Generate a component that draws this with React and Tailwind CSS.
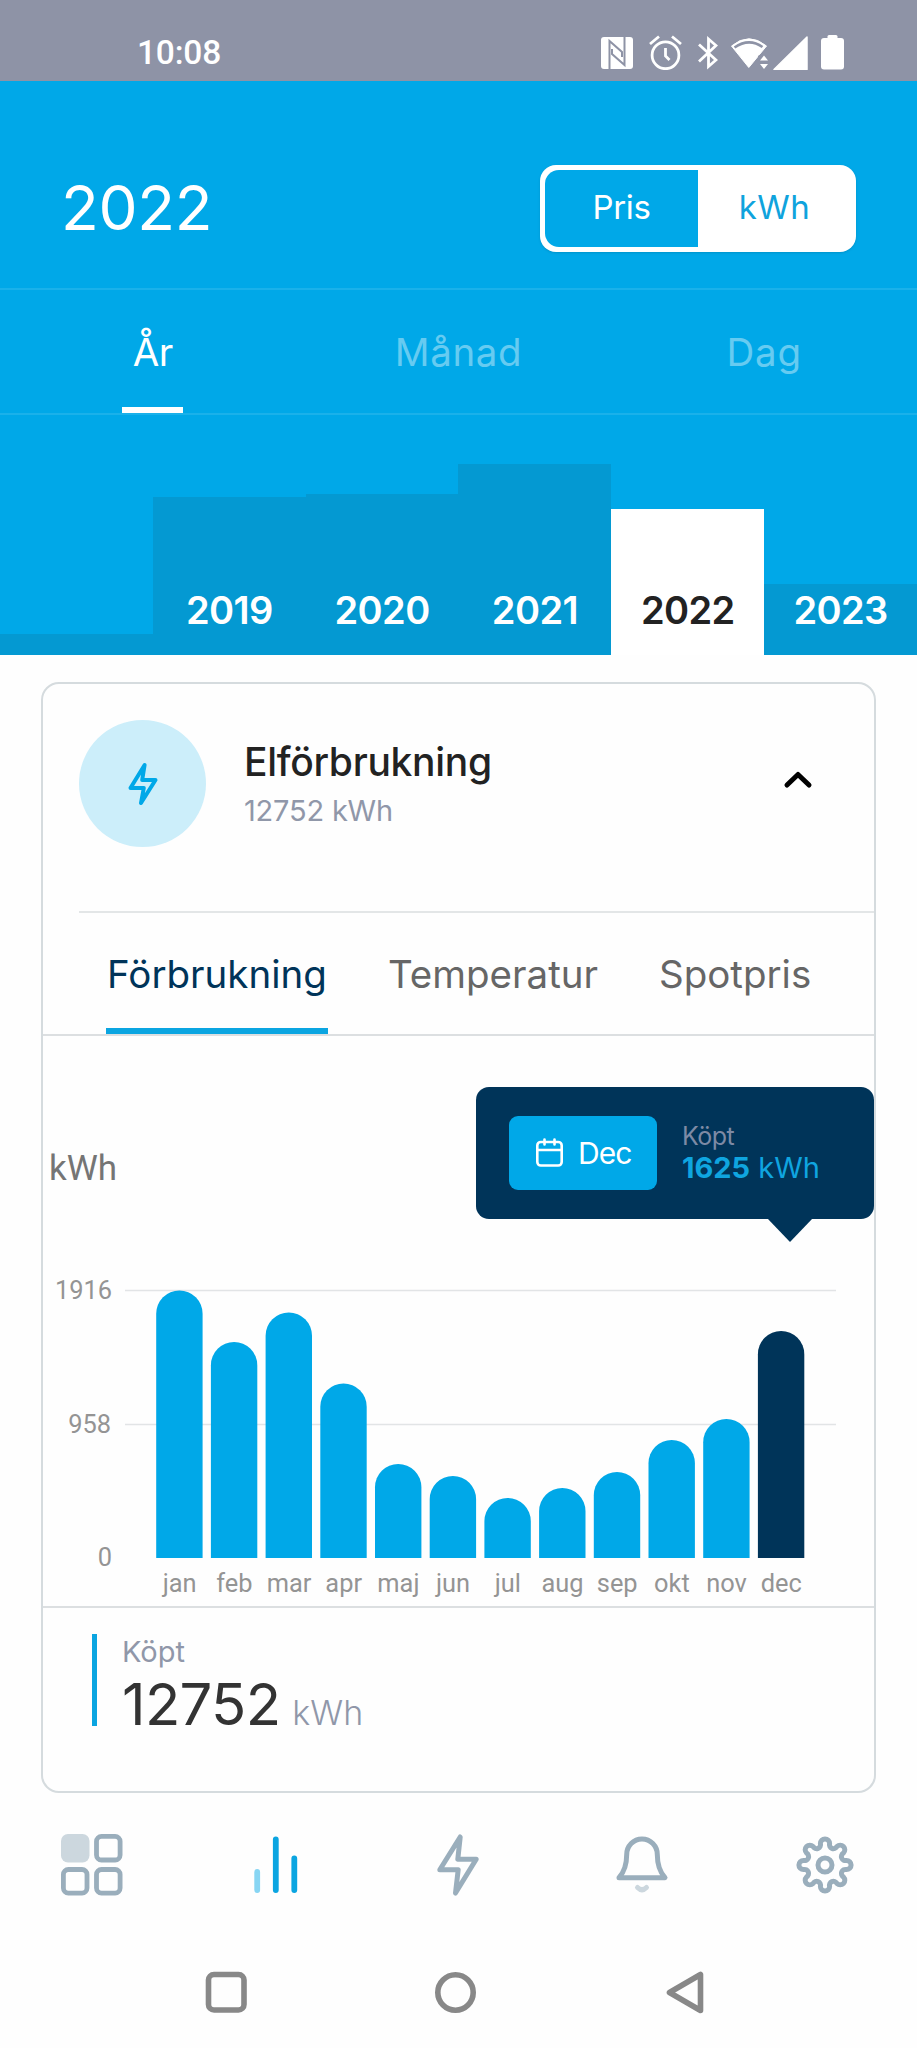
import React from "react";

const years = [
  { label: "", height: "h-[21px]" },
  { label: "2019", height: "h-[158px]" },
  { label: "2020", height: "h-[161px]" },
  { label: "2021", height: "h-[191px]" },
  { label: "2022", height: "h-[146px]", active: true },
  { label: "2023", height: "h-[71px]" },
];

const months = [
  { name: "jan", size: 267.5 },
  { name: "feb", size: 216 },
  { name: "mar", size: 245.5 },
  { name: "apr", size: 174.5 },
  { name: "maj", size: 94 },
  { name: "jun", size: 82 },
  { name: "jul", size: 60 },
  { name: "aug", size: 70 },
  { name: "sep", size: 86 },
  { name: "okt", size: 118 },
  { name: "nov", size: 139 },
  { name: "dec", size: 227, active: true },
];

const gearPath = () => {
  const turn = (x, y, deg) => {
    const a = (deg * Math.PI) / 180;
    const px = x * Math.cos(a) - y * Math.sin(a);
    const py = x * Math.sin(a) + y * Math.cos(a);
    return `${px.toFixed(2)} ${py.toFixed(2)}`;
  };
  let d = `M${turn(-4.6, -21.5, 0)}`;
  for (let i = 0; i < 8; i++) {
    d += `A4.6 4.6 0 0 1 ${turn(4.6, -21.5, i * 45)}`;
    d += `A4 4 0 0 0 ${turn(-4.6, -21.5, (i + 1) * 45)}`;
  }
  return d + "Z";
};

const StatusBar = () => {
  return (
    <div className="flex h-[81px] items-start justify-between bg-[#8e93a6] pr-[73px] pl-[137px] text-white">
      <span className="mt-[33px] font-['Roboto',sans-serif] text-[33.5px] leading-[40px] font-medium tracking-[-0.2px]">
        10:08
      </span>
      <div className="mt-[34px] flex">
        <svg className="mr-4" width="32" height="36" viewBox="0 -3 32 36">
          <rect width="32" height="32" rx="3" fill="#fff" />
          <path
            d="M8.5 32V4L21 15V20M23.500 0V28L11 17V12"
            fill="none"
            stroke="#8e93a6"
            strokeWidth="2"
          />
        </svg>
        <svg
          className="mr-4"
          width="33"
          height="36"
          viewBox="0 0 33 36"
          fill="none"
          stroke="#fff"
          strokeWidth="2.8"
        >
          <circle cx="16.5" cy="21.3" r="13.4" />
          <path d="M16.5 14v8l4 4M1 10l9-7.5M32 10l-9-7.5" />
        </svg>
        <svg
          className="mr-3"
          width="20"
          height="36"
          viewBox="0 0 20 36"
          fill="none"
          stroke="#fff"
          strokeWidth="2.8"
        >
          <path d="M1 10.5L18 26l-7.5 6.5V5L18 11.5 1 27.5" />
        </svg>
        <svg className="mr-[5px]" width="38" height="36" viewBox="0 0 38 36">
          <path
            d="M1.5 12Q19-2.5 36.5 12L18.8 33.5Z"
            fill="#fff"
            stroke="#fff"
            strokeLinejoin="round"
          />
          <path
            d="M4.5 13.5Q19 3.5 32.5 13"
            fill="none"
            stroke="#8e93a6"
            strokeWidth="2.6"
          />
          <path d="M28 22L33 18.500h5V36H28z" fill="#8e93a6" />
          <path d="M34 21.500l4 5h-8zM34 35l4-5h-8z" fill="#fff" />
        </svg>
        <svg className="mr-[13px]" width="35" height="36" viewBox="0 0 35 36">
          <path
            d="M1 35.5L34 3V35.5Z"
            fill="#fff"
            stroke="#fff"
            strokeWidth="1.5"
            strokeLinejoin="round"
          />
        </svg>
        <svg width="23" height="36" viewBox="0 0 23 36" fill="#fff">
          <rect x="6.5" y="1" width="10" height="6" rx="1.5" />
          <rect y="4" width="23" height="31.5" rx="3" />
        </svg>
      </div>
    </div>
  );
};

const Header = () => {
  return (
    <header className="bg-[#00a8e8] text-white">
      <div className="flex h-[209px] items-center justify-between border-b-2 border-[#1ab1ea] px-[61px] pt-[47px]">
        <h1 className="text-[62px] leading-none tracking-[-0.3px]">2022</h1>
        <div className="flex h-[87px] w-[316px] rounded-2xl bg-white p-[5px] text-[33px] shadow-sm">
          <button className="flex w-[153px] items-center justify-center rounded-l-[14px] bg-[#00a8e8] tracking-[-0.4px]">
            Pris
          </button>
          <button className="flex flex-1 items-center justify-center tracking-[0.5px] text-[#0fa3dd]">
            kWh
          </button>
        </div>
      </div>
      <div className="grid h-[125px] grid-cols-3 border-b-2 border-[#1ab1ea] text-center text-[38.5px] leading-[46px]">
        <div className="flex flex-col items-center justify-between pt-[39px]">
          <span className="tracking-[-0.5px]">År</span>
          <span className="h-[6px] w-[61px] bg-white"></span>
        </div>
        <div className="pt-[39px] tracking-[0.6px] text-[#66cbf1]">Månad</div>
        <div className="pt-[39px] tracking-[0.8px] text-[#66cbf1]">Dag</div>
      </div>
      <div className="flex h-[240px] items-end">
        {years.map((year) => (
          <div
            key={year.label}
            className={`${year.height} ${
              year.active ? "bg-white text-[#222]" : "bg-[#0499d2]"
            } flex w-1/6 items-end justify-center text-[38px] leading-[46px] font-semibold`}
          >
            {year.label && (
              <span className="pb-[22px] tracking-[-0.6px]">{year.label}</span>
            )}
          </div>
        ))}
      </div>
    </header>
  );
};

const Tooltip = () => {
  return (
    <div className="absolute top-[51px] right-0 flex h-[132px] w-[398px] items-center rounded-[13px] bg-[#003459] pl-[33px]">
      <div className="flex h-[74px] w-[148px] items-center rounded-[9px] bg-[#00a8e8] pl-[27px] text-[30px] text-white">
        <svg
          width="27"
          height="30"
          viewBox="0 0 27 30"
          fill="none"
          stroke="#fff"
          strokeWidth="2.6"
          strokeLinecap="round"
        >
          <rect x="1.3" y="4" width="24.4" height="23.5" rx="3.5" />
          <path d="M1.3 12h24.400M8.5 1.500v5M18.5 1.500v5" />
        </svg>
        <span className="ml-[15px] tracking-[-1px]">Dec</span>
      </div>
      <div className="ml-[25px] pb-[2px] leading-[32px]">
        <div className="text-[25px] tracking-[-0.5px] text-[#7d8aa5]">Köpt</div>
        <div className="text-[29px] text-[#0fa5e0]">
          <b>1625</b> kWh
        </div>
      </div>
      <svg
        className="absolute top-[131px] left-[291px]"
        width="46"
        height="24"
        viewBox="0 0 46 24"
      >
        <path d="M0 0h46L23 24z" fill="#003459" />
      </svg>
    </div>
  );
};

const Chart = () => {
  return (
    <div className="relative h-[572px] border-b-2 border-[#dcdfe1] pt-[110px] font-['Roboto',sans-serif]">
      <div className="mb-3 pl-[6px] text-[35px] leading-[46px] text-[#757575]">
        kWh
      </div>
      <svg
        className="block"
        width="831"
        height="400"
        viewBox="0 0 831 400"
        fontSize="25.4"
        fill="#949494"
      >
        <path d="M82 86.5h711M82 220.5h711" stroke="#e2e4e6" strokeWidth="1.5" />
        <g textAnchor="end">
          <text x="69" y="94.500">1916</text>
          <text x="68" y="228.500">958</text>
          <text x="69" y="362">0</text>
        </g>
        {months.map((month, i) => {
          const x = 113.2 + i * 54.7;
          const top = 354 - month.size;
          return (
            <g key={month.name}>
              <path
                d={`M${x} 354V${top + 23.2}a23.2 23.2 0 0 1 46.4 0V354z`}
                fill={month.active ? "#003459" : "#00a8e8"}
              />
              <text x={x + 23.4} y="388" textAnchor="middle">
                {month.name}
              </text>
            </g>
          );
        })}
      </svg>
      <div className="font-['Inter',sans-serif]">
        <Tooltip />
      </div>
    </div>
  );
};

const UsageCard = () => {
  return (
    <section className="mx-[41px] mt-[27px] h-[1111px] overflow-hidden rounded-[18px] border-2 border-[#d5dbde]">
      <div className="ml-[36px] flex h-[229px] items-start border-b-2 border-[#e3e6e7] pt-9">
        <div className="flex h-[127px] w-[127px] items-center justify-center rounded-full bg-[#cceefa]">
          <svg
            width="34"
            height="46"
            viewBox="-17 -23 34 46"
            fill="none"
            stroke="#00a8e8"
            strokeWidth="4"
            strokeLinejoin="round"
          >
            <path d="M1.6-19L-.8-4h13.300L-2 19 .8 4h-13.300z" />
          </svg>
        </div>
        <div className="ml-[38px] flex-1 pt-[19px]">
          <h2 className="text-[39px] leading-[46px] font-medium tracking-[-0.3px] text-[#222]">
            Elförbrukning
          </h2>
          <p className="mt-[9px] text-[29px] leading-[34px] tracking-[-0.2px] text-[#9097a9]">
            12752 kWh
          </p>
        </div>
        <svg
          className="mt-[48px] mr-[60px]"
          width="32"
          height="24"
          viewBox="0 0 32 24"
          fill="none"
          stroke="#000"
          strokeWidth="5"
          strokeLinecap="round"
          strokeLinejoin="round"
        >
          <path d="M5 17L16 6.5 27 17" />
        </svg>
      </div>
      <div className="flex h-[123px] gap-[60px] border-b-2 border-[#dcdfe1] pl-[63px] text-[38.5px] leading-[46px] text-[#666]">
        <div className="flex w-[222px] flex-col items-center justify-between pt-[38px] text-[#003459]">
          <span>Förbrukning</span>
          <span className="h-[6px] w-full bg-[#0ba5e1]"></span>
        </div>
        <div className="w-[211px] pt-[38px]">Temperatur</div>
        <div className="pt-[38px]">Spotpris</div>
      </div>
      <Chart />
      <div className="flex pt-[26px] pl-[49px]">
        <div className="h-[92px] w-[5px] bg-[#0ba5e1]"></div>
        <div className="ml-[25px] text-[#9097a9]">
          <div className="text-[29px] leading-[36px]">Köpt</div>
          <div className="flex items-baseline text-[34px] leading-[68px] font-light">
            <span className="mr-3 text-[58px] font-normal tracking-[-0.7px] text-[#333]">
              12752
            </span>
            kWh
          </div>
        </div>
      </div>
    </section>
  );
};

const BottomNav = () => {
  return (
    <nav className="grid h-[144px] grid-cols-5 justify-items-center pt-[41px]">
      <svg width="62" height="62" viewBox="0 0 62 62" fill="none" stroke="#9aaebc" strokeWidth="4.8">
        <rect width="28.5" height="28.5" rx="7" fill="#ccd7de" stroke="none" />
        <rect x="35.5" y="2.4" width="23.6" height="23.6" rx="5" />
        <rect x="2.4" y="35.5" width="23.6" height="23.6" rx="5" />
        <rect x="35.5" y="35.5" width="23.6" height="23.6" rx="5" />
      </svg>
      <svg width="62" height="62" viewBox="-31 -31 62 62" strokeWidth="5.8" strokeLinecap="round">
        <path d="M-17.8 7v18" stroke="#87d5f3" />
        <path d="M.8-25.500v50.500M19.3-6.500v31.500" stroke="#0ba5e1" />
      </svg>
      <svg width="62" height="62" viewBox="-31 -31 62 62" fill="none" stroke="#9aaebc" strokeWidth="5" strokeLinejoin="round">
        <path d="M2.2-28L-.2-5.700h18.400L-2.5 28 .2 4.700h-18.400z" />
      </svg>
      <svg width="62" height="62" viewBox="-31 -31 62 62" fill="none" stroke="#9aaebc" strokeWidth="5" strokeLinecap="round" strokeLinejoin="round">
        <path d="M-23 12.700C-17 6-15.300-1-15.300-10.500a15.300 15.500 0 0 1 30.600 0C15.300-1 17 6 23 12.700z" />
        <path d="M-4.5 22.500q4.500 4.500 9 0" stroke="#ccd7de" />
      </svg>
      <svg width="62" height="62" viewBox="-31 -31 62 62" fill="none" stroke="#9aaebc" strokeWidth="5">
        <path d={gearPath()} />
        <circle r="7" />
      </svg>
    </nav>
  );
};

const SystemNav = () => {
  return (
    <div className="flex items-center pt-[34px] pl-[205px]">
      <svg width="43" height="43" viewBox="0 0 43 43" fill="none" stroke="#888" strokeWidth="5.6">
        <rect x="3.5" y="3.5" width="35.5" height="35.5" rx="5.5" />
      </svg>
      <svg className="ml-[186px]" width="43" height="43" viewBox="0 0 43 43" fill="none" stroke="#888" strokeWidth="5.6">
        <circle cx="21.5" cy="21.5" r="17.7" />
      </svg>
      <svg className="ml-[188px]" width="40" height="43" viewBox="0 0 40 43" fill="none" stroke="#888" strokeWidth="5.6" strokeLinejoin="round">
        <path d="M4.5 21.5L35.5 3.5v36z" />
      </svg>
    </div>
  );
};

const App = () => {
  return (
    <div className="h-[2048px] w-[917px] overflow-hidden bg-[#fefefe] font-['Inter',sans-serif]">
      <StatusBar />
      <Header />
      <UsageCard />
      <BottomNav />
      <SystemNav />
    </div>
  );
};

export default App;
